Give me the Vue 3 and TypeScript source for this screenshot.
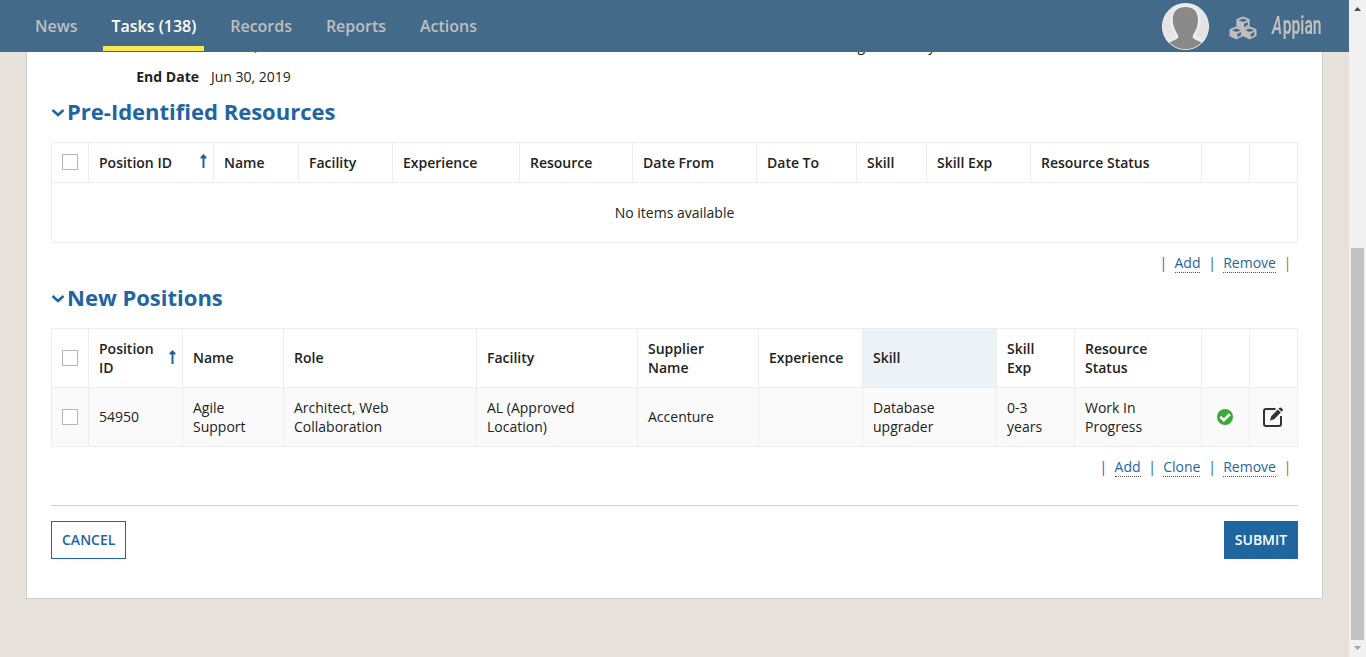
<script setup lang="ts">
interface Column {
  label: string
  width: number
  sorted?: boolean
  active?: boolean
}

const tabs = [
  { label: 'News', active: false },
  { label: 'Tasks (138)', active: true },
  { label: 'Records', active: false },
  { label: 'Reports', active: false },
  { label: 'Actions', active: false },
]

const resourceColumns: Column[] = [
  { label: 'Position ID', width: 125, sorted: true },
  { label: 'Name', width: 85 },
  { label: 'Facility', width: 94 },
  { label: 'Experience', width: 127 },
  { label: 'Resource', width: 113 },
  { label: 'Date From', width: 124 },
  { label: 'Date To', width: 100 },
  { label: 'Skill', width: 70 },
  { label: 'Skill Exp', width: 104 },
  { label: 'Resource Status', width: 171 },
  { label: '', width: 48 },
  { label: '', width: 48 },
]

const positionColumns: Column[] = [
  { label: 'Position ID', width: 94, sorted: true },
  { label: 'Name', width: 101 },
  { label: 'Role', width: 193 },
  { label: 'Facility', width: 161 },
  { label: 'Supplier Name', width: 121 },
  { label: 'Experience', width: 104 },
  { label: 'Skill', width: 134, active: true },
  { label: 'Skill Exp', width: 78 },
  { label: 'Resource Status', width: 127 },
  { label: '', width: 48 },
  { label: '', width: 48 },
]

const positions = [
  ['54950', 'Agile Support', 'Architect, Web Collaboration', 'AL (Approved Location)', 'Accenture', '', 'Database upgrader', '0-3 years', 'Work In Progress'],
]
</script>

<template>
  <div class="page">
    <div class="view">
      <header class="topbar">
        <nav class="tabs">
          <a v-for="tab in tabs" :key="tab.label" class="tab" :class="{ active: tab.active }">{{ tab.label }}</a>
        </nav>
        <div class="account">
          <svg class="avatar" width="48" height="49" viewBox="0 0 48 49">
            <defs>
              <clipPath id="avatar-clip"><circle cx="23.500" cy="24.500" r="22.800" /></clipPath>
              <filter id="avatar-glow"><feGaussianBlur stdDeviation="1" /></filter>
            </defs>
            <circle cx="23.500" cy="24.500" r="23.500" fill="#f8f8f8" />
            <g clip-path="url(#avatar-clip)">
              <rect width="48" height="49" fill="#e4e4e4" />
              <path d="M23.500 5C15.500 5 10.700 9.500 10.700 17.500c0 6 2 10 4.300 14 2 3.500 1.500 4.500-.5 5.500C12 38.500 10 39 7.500 40.500V49h32v-8.500C37 39 35 38.500 32.500 37c-2-1-2.500-2-.5-5.500 2.300-4 4-8 4-14C36 9.500 31.500 5 23.500 5z" fill="none" stroke="#f6f6f6" stroke-width="3" filter="url(#avatar-glow)" />
              <path d="M23.500 5C15.500 5 10.700 9.500 10.700 17.500c0 6 2 10 4.300 14 2 3.500 1.500 4.500-.5 5.500C12 38.500 10 39 7.500 40.500V49h32v-8.500C37 39 35 38.500 32.500 37c-2-1-2.500-2-.5-5.500 2.300-4 4-8 4-14C36 9.500 31.500 5 23.500 5z" fill="#8a8a8a" />
            </g>
          </svg>
          <svg class="cubes" width="28" height="24" viewBox="0 0 28 24">
            <g fill="#bfbfbf" stroke="#bfbfbf" stroke-width="1.200" stroke-linejoin="round">
              <path d="M14 1l6 2.600v6.400l-6 3-6-3V3.600z" />
              <path d="M7.300 11l6.300 2.600v6.200l-6.300 3-6.200-3v-6.200z" />
              <path d="M20.700 11l6.200 2.600v6.200l-6.200 3-6.300-3v-6.200z" />
            </g>
            <g fill="#446a89">
              <path d="M14 2.400l4.500 1.800L14 6.100 9.500 4.200zM15 7.700l3.700-1.700v3.300L15 11.200z" />
              <path d="M7.300 12.400l4.500 1.800-4.500 1.900-4.500-1.900zM8.300 17.700L12 16v3.300l-3.700 1.900z" />
              <path d="M20.700 12.400l4.500 1.800-4.500 1.900-4.500-1.900zM21.700 17.700l3.700-1.700v3.300l-3.700 1.900z" />
            </g>
          </svg>
          <div class="brand"><span class="brand-text"><em>A</em>ppian</span></div>
        </div>
      </header>

      <main class="sheet">
        <div class="details">
          <dl class="fields">
            <dt>Start Date</dt><dd>Feb 01, 2019</dd>
            <dt>End Date</dt><dd>Jun 30, 2019</dd>
          </dl>
          <span class="category">Program Safety</span>
        </div>

        <h2 class="section-title">
          <svg width="14" height="10" viewBox="0 0 14 10"><path d="M1.500 2l5.500 5 5.500-5" /></svg>Pre-Identified Resources
        </h2>
        <table class="grid">
          <colgroup>
            <col class="check-col">
            <col v-for="(c, i) in resourceColumns" :key="i" :style="{ width: c.width + 'px' }">
          </colgroup>
          <thead>
            <tr class="single">
              <th class="check"><span class="box"></span></th>
              <th v-for="(c, i) in resourceColumns" :key="i">
                <span class="head">{{ c.label }}<svg v-if="c.sorted" class="sort" width="7" height="14" viewBox="0 0 7 14"><path d="M3.500 0L6.500 3V4.500H4.500V14H2.500V4.500H.5V3z" /></svg></span>
              </th>
            </tr>
          </thead>
          <tbody>
            <tr class="empty"><td :colspan="resourceColumns.length + 1">No items available</td></tr>
          </tbody>
        </table>
        <div class="links">
          <i>|</i><a>Add</a><i>|</i><a>Remove</a><i class="last">|</i>
        </div>

        <h2 class="section-title second">
          <svg width="14" height="10" viewBox="0 0 14 10"><path d="M1.500 2l5.500 5 5.500-5" /></svg>New Positions
        </h2>
        <table class="grid">
          <colgroup>
            <col class="check-col">
            <col v-for="(c, i) in positionColumns" :key="i" :style="{ width: c.width + 'px' }">
          </colgroup>
          <thead>
            <tr class="double">
              <th class="check"><span class="box"></span></th>
              <th v-for="(c, i) in positionColumns" :key="i" :class="{ hovered: c.active }">
                <span class="head">{{ c.label }}<svg v-if="c.sorted" class="sort" width="7" height="14" viewBox="0 0 7 14"><path d="M3.500 0L6.500 3V4.500H4.500V14H2.500V4.500H.5V3z" /></svg></span>
              </th>
            </tr>
          </thead>
          <tbody>
            <tr v-for="row in positions" :key="row[0]" class="double shaded">
              <td class="check"><span class="box"></span></td>
              <td v-for="(cell, i) in row" :key="i">{{ cell }}</td>
              <td class="icon">
                <svg width="16" height="16" viewBox="0 0 16 16"><circle cx="8" cy="8" r="8" fill="#3ba83c" /><path d="M3.300 7.700l3.500 3.500 6-6" fill="none" stroke="#fff" stroke-width="2.700" /></svg>
              </td>
              <td class="icon">
                <svg width="20" height="20" viewBox="0 0 20 20">
                  <path d="M12.500 2H3Q1 2 1 4v13q0 2 2 2h13q2 0 2-2V9" fill="none" stroke="#333" stroke-width="2" />
                  <path d="M7 13.500l1.200-4.300 6.600-6.600 3 3-6.600 6.600zM15.600 1.800l1-1q.8-.7 1.600 0l1.300 1.300q.8.8 0 1.600l-1 1z" fill="#333" />
                </svg>
              </td>
            </tr>
          </tbody>
        </table>
        <div class="links">
          <i>|</i><a>Add</a><i>|</i><a>Clone</a><i>|</i><a>Remove</a><i class="last">|</i>
        </div>

        <footer class="buttons">
          <button class="btn">CANCEL</button>
          <button class="btn primary">SUBMIT</button>
        </footer>
      </main>
    </div>

    <aside class="scrollbar">
      <svg width="17" height="17" viewBox="0 0 17 17"><path d="M5 11l3.500-4 3.500 4z" fill="#505050" /></svg>
      <div class="track"><div class="thumb"></div></div>
      <svg width="17" height="17" viewBox="0 0 17 17"><path d="M5 6l3.500 4L12 6z" fill="#a3a3a3" /></svg>
    </aside>
  </div>
</template>

<style>
body {
  margin: 0;
  overflow: hidden;
}
</style>

<style scoped>
.page {
  display: flex;
  width: 1366px;
  height: 657px;
  background: #e7e3dc;
  font: 14px/19px "Open Sans", "Noto Sans", sans-serif;
  color: #222;
}
.page * {
  box-sizing: border-box;
}
.view {
  width: 1349px;
  height: 657px;
  overflow: hidden;
}
.topbar {
  position: relative;
  z-index: 1;
  display: flex;
  justify-content: space-between;
  height: 52px;
  background: #446a89;
}
.tabs {
  display: flex;
  gap: 18.4px;
  padding-left: 27px;
}
.tab {
  height: 51px;
  padding: 0 7.500px 0 8px;
  border-bottom: 5px solid transparent;
  font-size: 16px;
  line-height: 52px;
  font-weight: 600;
  color: #bfbfbf;
}
.tab.active {
  color: #fff;
  border-color: #fbe753;
}
.account {
  display: flex;
  align-items: flex-start;
  padding-right: 24px;
}
.avatar {
  margin: 2px 19px 0 0;
}
.cubes {
  margin: 16px 14px 0 0;
}
.brand {
  width: 54px;
  padding: 10px 0 0 1px;
}
.brand-text {
  display: inline-block;
  transform: scaleX(0.625);
  transform-origin: 0 0;
  font: 600 25px/31px Roboto, sans-serif;
  color: #bfbfbf;
}
.brand-text em {
  margin-right: 1px;
}
.sheet {
  width: 1297px;
  height: 564px;
  margin: -17px 0 0 26px;
  padding: 0 24px;
  background: #fff;
  border: 1px solid #ccc;
}
.details {
  display: flex;
}
.fields {
  display: grid;
  grid-template-columns: 148px auto;
  column-gap: 12px;
  row-gap: 12px;
  width: 784px;
  margin: 0;
}
.fields dt {
  font-weight: 700;
  text-align: right;
}
.fields dd {
  margin: 0;
}
.section-title {
  display: flex;
  align-items: center;
  gap: 2px;
  height: 30px;
  margin: 10px 0 16px;
  font-size: 22px;
  line-height: 30px;
  font-weight: 700;
  color: #1f659f;
}
.section-title svg {
  margin-top: 4px;
  fill: none;
  stroke: #1f659f;
  stroke-width: 2.500px;
}
.second {
  margin-top: 9px;
}
.grid {
  width: 1247px;
  border-collapse: collapse;
  table-layout: fixed;
}
.check-col {
  width: 37px;
}
.grid th,
.grid td {
  padding: 0 10px 0.5px;
  border: 1px solid #ededed;
  text-align: left;
  vertical-align: middle;
}
.grid th {
  font-weight: 600;
}
.single {
  height: 40px;
}
.double {
  height: 59px;
}
.shaded {
  background: #fafafa;
}
.hovered {
  background: #edf2f6;
}
.head {
  display: flex;
  align-items: center;
  justify-content: space-between;
  padding-right: 4px;
}
.sort {
  flex: none;
  margin: -2px -8.2px 0 0;
  fill: #1f659f;
}
.box {
  display: block;
  width: 16px;
  height: 16px;
  background: #fff;
  border: 1px solid #b5b5b5;
}
.grid .empty td {
  height: 60px;
  text-align: center;
}
.grid .icon {
  padding: 0 1.5px 0 0;
  text-align: center;
}
.icon svg {
  display: block;
  margin: 0 auto;
}
.links {
  display: flex;
  justify-content: flex-end;
  gap: 9px;
  height: 30px;
  padding: 10px 8.4px 0 0;
  color: #1f659f;
}
.links a {
  height: 20px;
  border-bottom: 1px dotted #555;
}
.links i {
  width: 4.7px;
  margin: 0 1.3px 0 -1.3px;
  font-style: normal;
  text-align: center;
}
.links .last {
  color: #b8690d;
}
.buttons {
  display: flex;
  justify-content: space-between;
  margin-top: 28px;
  padding-top: 15px;
  border-top: 1px solid #d0d0d0;
}
.btn {
  height: 38px;
  padding: 0 10px 2px;
  border: 1px solid #1f659f;
  background: #fff;
  font: 600 14px/19px "Open Sans", sans-serif;
  color: #1f659f;
}
.primary {
  width: 74px;
  padding: 0 0 2px;
  background: #1f659f;
  color: #fff;
}
.scrollbar {
  display: flex;
  flex-direction: column;
  width: 17px;
  background: #f1f1f1;
}
.track {
  flex: 1;
  padding: 231px 2px 0;
}
.thumb {
  height: 392px;
  background: #c1c1c1;
}
</style>
